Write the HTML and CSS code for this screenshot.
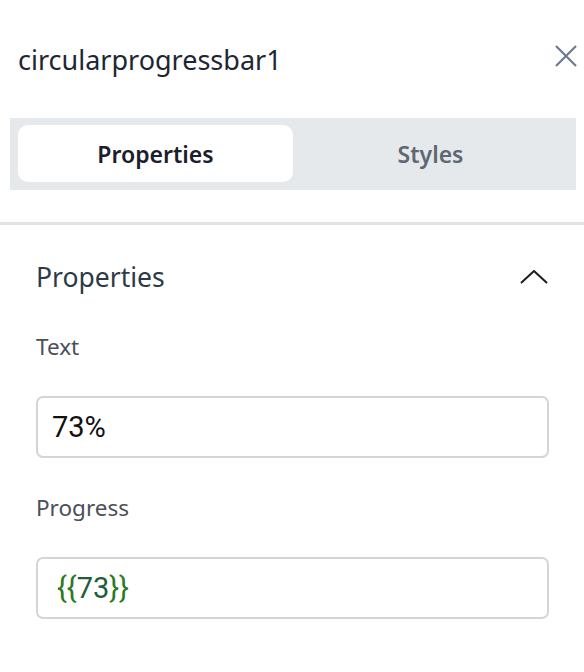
FILE: index.html
```html
<!DOCTYPE html>
<html>
<head>
<meta charset="utf-8">
<link rel="stylesheet" href="styles.css">
</head>
<body>
<div class="panel">
  <div class="header">
    <div class="title">circularprogressbar1</div>
    <button class="close" aria-label="Close">
      <svg width="22" height="22" viewBox="0 0 22 22"><path d="M1 1 L21 21 M21 1 L1 21" stroke="#6b7a91" stroke-width="2.2" fill="none"/></svg>
    </button>
  </div>
  <div class="tabs">
    <div class="tab active">Properties</div>
    <div class="tab">Styles</div>
  </div>
  <div class="divider"></div>
  <div class="section">
    <div class="section-head">
      <div class="section-title">Properties</div>
      <svg class="chevron" width="28" height="14" viewBox="0 0 28 14"><path d="M1 13 L14 1 L27 13" stroke="#1c1c1c" stroke-width="2" fill="none"/></svg>
    </div>
    <div class="field">
      <div class="label">Text</div>
      <div class="input"><span class="value">73%</span></div>
    </div>
    <div class="field">
      <div class="label">Progress</div>
      <div class="input"><span class="value code"><span class="brace">{{</span>73<span class="brace">}}</span></span></div>
    </div>
  </div>
</div>
</body>
</html>
```

FILE: styles.css
```css
* { box-sizing: border-box; }
html, body { margin: 0; padding: 0; background: #fff; }
body { width: 584px; height: 672px; overflow: hidden; font-family: "Noto Sans", "Open Sans", sans-serif; }
.panel { display: flex; flex-direction: column; }
.header { display: flex; justify-content: space-between; align-items: flex-start; padding: 38px 7px 0 18px; height: 118px; }
.title { font-size: 27px; line-height: 44px; color: #1d2733; }
.close { border: 0; background: none; padding: 0; margin-top: 7px; width: 22px; height: 22px; display: block; }
.close svg { display: block; }
.tabs { display: grid; grid-template-columns: 1fr 1fr; margin: 0 8px 0 10px; padding: 7px 8px 8px; background: #e6e9ec; height: 72px; }
.tab { display: flex; align-items: center; justify-content: center; font-size: 23px; font-weight: 600; color: #5f6772; border-radius: 10px; }
.tab.active { background: #fff; color: #1a202b; }
.divider { margin-top: 32px; height: 3px; background: #e1e2e4; }
.section { padding: 0 35px 0 36px; }
.section-head { display: flex; justify-content: space-between; align-items: center; margin-top: 32px; height: 40px; }
.section-title { font-size: 26.5px; line-height: 40px; color: #2c3a48; }
.chevron { margin-right: 1px; }
.field { margin-top: 36px; }
.label { font-size: 22.5px; line-height: 28px; color: #4a4f58; }
.input { margin-top: 35px; height: 62px; border: 2px solid #d3d5d8; border-radius: 7px; display: flex; align-items: center; padding-left: 14px; }
.value { font-family: Roboto, "Liberation Sans", sans-serif; font-size: 29px; color: #111; }
.code { color: #1f5c3c; margin-left: 5px; }
.brace { color: #2b7a1c; }
```
